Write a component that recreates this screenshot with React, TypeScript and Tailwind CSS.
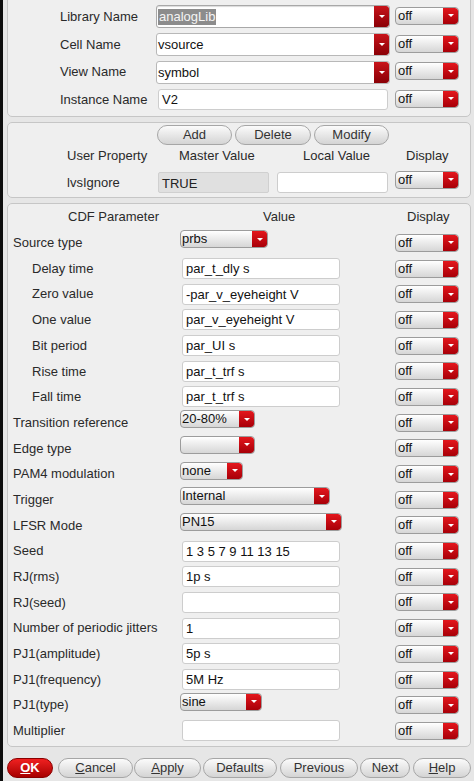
import React from "react";

const font = "font-['Liberation_Sans',Arial,sans-serif]";

function RedButton({ dark }: { dark?: boolean }) {
  return (
    <div
      className={
        "w-[15px] h-full flex items-center justify-center rounded-r-[3px] " +
        (dark
          ? "bg-linear-to-b from-[#c8141a] to-[#8a0006]"
          : "bg-linear-to-b from-[#e4161c] to-[#a80008]")
      }
    >
      <span className="w-0 h-0 border-l-[3px] border-r-[3px] border-t-[3px] border-l-transparent border-r-transparent border-t-white" />
    </div>
  );
}

function OffSelect() {
  return (
    <div className="w-[64px] h-[18px] flex rounded-[4px] border border-[#9c9c9c] bg-linear-to-b from-white to-[#d6d6d6] overflow-hidden shrink-0">
      <span className="flex-1 pl-[2px] leading-[16px] text-[13px] text-[#111]">off</span>
      <RedButton />
    </div>
  );
}

function ValueSelect({ text, width }: { text: string; width: number }) {
  return (
    <div
      className="h-[18px] mb-[7px] flex rounded-[4px] border border-[#9c9c9c] bg-linear-to-b from-white to-[#d6d6d6] overflow-hidden shrink-0"
      style={{ width }}
    >
      <span className="flex-1 pl-[1px] leading-[15px] text-[13px] text-[#111]">{text}</span>
      <RedButton />
    </div>
  );
}

function TextBox({ value, width, className = "" }: { value: string; width: number; className?: string }) {
  return (
    <div
      className={"h-[21px] rounded-[3px] border border-[#cdcdcd] bg-white pl-[3px] leading-[19px] text-[13px] text-[#111] shrink-0 " + className}
      style={{ width }}
    >
      {value}
    </div>
  );
}

function Pill({ children, w, red, className = "" }: { children: React.ReactNode; w: number; red?: boolean; className?: string }) {
  return (
    <div
      className={
        "h-[20px] rounded-full flex items-center justify-center text-[13px] shrink-0 border " +
        (red
          ? "bg-linear-to-b from-[#f02020] to-[#a80000] border-[#8a0000] text-white font-bold "
          : "bg-linear-to-b from-[#fbfbfb] to-[#d4d4d4] border-[#a6a6a6] text-[#333] ") +
        className
      }
      style={{ width: w }}
    >
      {children}
    </div>
  );
}

function TopRow({ label, children }: { label: string; children: React.ReactNode }) {
  return (
    <div className="h-[27.7px] flex items-center">
      <span className="w-[96px] shrink-0">{label}</span>
      {children}
      <div className="ml-[5px] -mt-[2px]">
        <OffSelect />
      </div>
    </div>
  );
}

type Row = { label: string; indent?: boolean; kind: "input" | "combo"; value: string; w?: number };

const rows: Row[] = [
  { label: "Source type", kind: "combo", value: "prbs", w: 88 },
  { label: "Delay time", indent: true, kind: "input", value: "par_t_dly s" },
  { label: "Zero value", indent: true, kind: "input", value: "-par_v_eyeheight V" },
  { label: "One value", indent: true, kind: "input", value: "par_v_eyeheight V" },
  { label: "Bit period", indent: true, kind: "input", value: "par_UI s" },
  { label: "Rise time", indent: true, kind: "input", value: "par_t_trf s" },
  { label: "Fall time", indent: true, kind: "input", value: "par_t_trf s" },
  { label: "Transition reference", kind: "combo", value: "20-80%", w: 75 },
  { label: "Edge type", kind: "combo", value: "", w: 75 },
  { label: "PAM4 modulation", kind: "combo", value: "none", w: 63 },
  { label: "Trigger", kind: "combo", value: "Internal", w: 150 },
  { label: "LFSR Mode", kind: "combo", value: "PN15", w: 162 },
  { label: "Seed", kind: "input", value: "1 3 5 7 9 11 13 15" },
  { label: "RJ(rms)", kind: "input", value: "1p s" },
  { label: "RJ(seed)", kind: "input", value: "" },
  { label: "Number of periodic jitters", kind: "input", value: "1" },
  { label: "PJ1(amplitude)", kind: "input", value: "5p s" },
  { label: "PJ1(frequency)", kind: "input", value: "5M Hz" },
  { label: "PJ1(type)", kind: "combo", value: "sine", w: 82 },
  { label: "Multiplier", kind: "input", value: "" },
];

export default function App() {
  return (
    <div className={"w-[474px] h-[781px] overflow-hidden flex bg-[#e6e6e6] text-[13px] text-[#2a2a2a] " + font}>
      <div className="w-[3px] h-full bg-[#0c0c0c] shrink-0" />
      <div className="flex-1 pl-[4px] pr-[6px] flex flex-col">
        {/* instance panel */}
        <div className="-mt-[6px] h-[123px] rounded-[5px] border border-[#c6c6c6] bg-[#efefef] pt-[8px] pl-[52px]">
          <TopRow label="Library Name">
            <div className="w-[234px] h-[23px] flex rounded-[3px] border border-[#a8a8a8] bg-white overflow-hidden shadow-[inset_0_1px_1px_rgba(0,0,0,0.15)]">
              <div className="flex-1 flex items-center pl-[1px]">
                <span className="bg-[#8c8c8c] text-[#f4f4f4] px-[1px] leading-[16px]">analogLib</span>
              </div>
              <RedButton dark />
            </div>
          </TopRow>
          <TopRow label="Cell Name">
            <div className="w-[234px] h-[23px] flex rounded-[3px] border border-[#b8b8b8] bg-white overflow-hidden">
              <span className="flex-1 pl-[1px] leading-[21px] text-[#111]">vsource</span>
              <RedButton dark />
            </div>
          </TopRow>
          <TopRow label="View Name">
            <div className="w-[234px] h-[23px] flex rounded-[3px] border border-[#b8b8b8] bg-white overflow-hidden">
              <span className="flex-1 pl-[1px] leading-[21px] text-[#111]">symbol</span>
              <RedButton dark />
            </div>
          </TopRow>
          <TopRow label="Instance Name">
            <TextBox value="V2" width={230} className="ml-[2px] mr-[2px]" />
          </TopRow>
        </div>

        {/* user property panel */}
        <div className="mt-[5px] h-[76px] rounded-[5px] border border-[#c6c6c6] bg-[#efefef] pt-[2px]">
          <div className="flex gap-[3px] pl-[149px]">
            <Pill w={75}>Add</Pill>
            <Pill w={76}>Delete</Pill>
            <Pill w={75}>Modify</Pill>
          </div>
          <div className="h-[22px] flex items-center pl-[59px]">
            <span className="w-[112px]">User Property</span>
            <span className="w-[124px]">Master Value</span>
            <span className="w-[103px]">Local Value</span>
            <span>Display</span>
          </div>
          <div className="mt-[5px] h-[21px] flex items-center pl-[59px]">
            <span className="w-[91px] shrink-0">lvsIgnore</span>
            <div className="w-[111px] h-[21px] rounded-[2px] border border-[#d0d0d0] bg-[#e0e0e0] pl-[3px] leading-[21px] text-[#222]">
              TRUE
            </div>
            <TextBox value="" width={111} className="ml-[8px]" />
            <div className="ml-[7px] -mt-[6px]">
              <OffSelect />
            </div>
          </div>
        </div>

        {/* CDF parameters panel */}
        <div className="mt-[5px] h-[544px] rounded-[5px] border border-[#c6c6c6] bg-[#efefef]">
          <div className="h-[26px] flex items-center">
            <span className="w-[255px] pl-[60px]">CDF Parameter</span>
            <span className="w-[144px]">Value</span>
            <span>Display</span>
          </div>
          {rows.map((r) => (
            <div key={r.label} className="h-[25.7px] flex items-center">
              <span className={"w-[172px] shrink-0 " + (r.indent ? "pl-[24px]" : "pl-[5px]")}>{r.label}</span>
              <div className="w-[215px] shrink-0 flex items-center">
                {r.kind === "combo" ? (
                  <ValueSelect text={r.value} width={r.w ?? 80} />
                ) : (
                  <TextBox value={r.value} width={158} className="ml-[2px]" />
                )}
              </div>
              <OffSelect />
            </div>
          ))}
        </div>

        {/* bottom buttons */}
        <div className="mt-[11px] flex">
          <Pill w={46} red>
            <span><span className="underline">O</span>K</span>
          </Pill>
          <Pill w={75} className="ml-[5px]">
            <span><span className="underline">C</span>ancel</span>
          </Pill>
          <Pill w={67} className="ml-[1px]">
            <span><span className="underline">A</span>pply</span>
          </Pill>
          <Pill w={74} className="ml-[2px]">Defaults</Pill>
          <Pill w={78} className="ml-[3px]">Previous</Pill>
          <Pill w={50} className="ml-[2px]">Next</Pill>
          <Pill w={58} className="ml-[3px]">
            <span><span className="underline">H</span>elp</span>
          </Pill>
        </div>
      </div>
    </div>
  );
}
